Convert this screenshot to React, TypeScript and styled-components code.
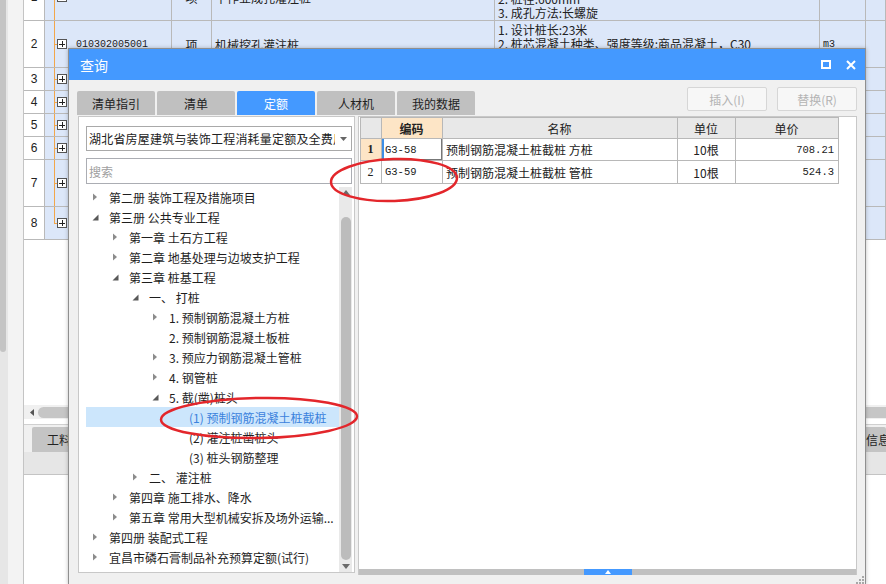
import React from "react";
import styled, { createGlobalStyle } from "styled-components";

const GlobalStyle = createGlobalStyle`
  html, body { margin: 0; padding: 0; }
  body {
    width: 886px; height: 584px; overflow: hidden; background: #fff;
    font-family: "Noto Sans CJK SC", "Noto Sans", sans-serif; font-size: 12px; color: #222;
  }
  * { box-sizing: border-box; }
`;

const Page = styled.div`
  position: relative;
  width: 886px;
  height: 584px;
  overflow: hidden;
  display: flex;
  background: #fff;
`;

/* ---------- background application ---------- */
const SideRail = styled.div`
  width: 8px;
  background: #e6e6e6;
  display: flex;
  flex-direction: column;
`;
const SideThumb = styled.div`
  width: 6px;
  height: 352px;
  background: #c4c4c4;
  border-radius: 0 0 3px 3px;
`;
const Gutter = styled.div`
  width: 16px;
  background: #f3f3f3;
  border-right: 1px solid #c4c4c4;
`;
const Main = styled.div`
  width: 862px;
  display: flex;
  flex-direction: column;
`;
const bgCols = "21px 127px 40px 283px 325px 46px 20px";
const BgRow = styled.div<{ $h: number; $offset?: number }>`
  display: grid;
  grid-template-columns: ${bgCols};
  height: ${(p) => p.$h}px;
  margin-top: ${(p) => p.$offset ?? 0}px;
  flex-shrink: 0;
`;
const BgCell = styled.div<{ $white?: boolean; $center?: boolean }>`
  background: ${(p) => (p.$white ? "#fff" : "#dce7f9")};
  border-right: 1px solid #b9b9b9;
  border-bottom: 1px solid #b9b9b9;
  display: flex;
  align-items: center;
  justify-content: ${(p) => (p.$center ? "center" : "flex-start")};
  padding-left: ${(p) => (p.$center ? 0 : 3)}px;
  overflow: hidden;
  white-space: nowrap;
  font-size: 12px;
`;
const TreeCell = styled(BgCell)<{ $last?: boolean }>`
  padding-left: 12px;
  background:
    linear-gradient(#f2a64a, #f2a64a) no-repeat 9px 50% / 4px 1px,
    linear-gradient(#f2a64a, #f2a64a) no-repeat 9px 0 / 1px ${(p) => (p.$last ? "50%" : "100%")},
    #dce7f9;
`;
const PlusBox = styled.span`
  width: 10px;
  height: 10px;
  flex-shrink: 0;
  border: 1px solid #555;
  background:
    linear-gradient(#222, #222) no-repeat center / 6px 1px,
    linear-gradient(#222, #222) no-repeat center / 1px 6px,
    #fff;
`;
const CodeText = styled.span`
  margin-left: 9px;
  font-family: "Liberation Mono", monospace;
  font-size: 10px;
`;
const DescCell = styled(BgCell)<{ $pt: number }>`
  display: block;
  padding-top: ${(p) => p.$pt}px;
  line-height: 14px;
`;
const UnitCell = styled(BgCell)`
  font-family: "Liberation Mono", monospace;
  font-size: 10px;
`;
const NumText = styled.span`
  font-family: "Liberation Sans", sans-serif;
  font-size: 12px;
`;
const BlankArea = styled.div`
  height: 165px;
  flex-shrink: 0;
  background: #fff;
`;
const HScroll = styled.div`
  height: 14px;
  flex-shrink: 0;
  background: #f0f0f0;
  display: flex;
  align-items: center;
  padding-left: 6px;
  gap: 4px;
`;
const HThumb = styled.div`
  flex: 1;
  height: 11px;
  background: #c6c6c6;
  border-radius: 6px 0 0 6px;
`;
const BottomTabs = styled.div`
  height: 28px;
  margin-top: 5px;
  flex-shrink: 0;
  background: #f0f0f0;
  border-top: 1px solid #d0d0d0;
  display: flex;
  align-items: flex-end;
  padding-left: 8px;
`;
const BTab = styled.div<{ $narrow?: boolean }>`
  height: 25px;
  background: #c4c4c4;
  display: flex;
  align-items: center;
  padding: 0 ${(p) => (p.$narrow ? "0 0 4px" : "15px")};
  border-radius: 2px 2px 0 0;
  white-space: nowrap;
  overflow: hidden;
  font-size: 12px;
  width: ${(p) => (p.$narrow ? "24px" : "auto")};
  margin-left: ${(p) => (p.$narrow ? "auto" : "0")};
`;
const SubBar = styled.div`
  height: 23px;
  flex-shrink: 0;
  background: #e6e6e6;
  border-bottom: 1px solid #c4c4c4;
`;

/* ---------- dialog ---------- */
const Dialog = styled.div`
  position: absolute;
  left: 68px;
  top: 48px;
  width: 798px;
  height: 537px;
  border: 1px solid #8f8f8f;
  background: #f0f0f0;
  display: flex;
  flex-direction: column;
  box-shadow: 0 0 4px rgba(0, 0, 0, 0.25);
`;
const TitleBar = styled.div`
  height: 31px;
  flex-shrink: 0;
  background: #4499ff;
  color: #fff;
  font-size: 14px;
  display: flex;
  align-items: center;
  padding: 0 9px 0 11px;
`;
const TitleText = styled.span`
  flex: 1;
`;
const TitleIcons = styled.div`
  display: flex;
  align-items: center;
  gap: 15px;
`;
const Toolbar = styled.div`
  height: 35px;
  flex-shrink: 0;
  display: flex;
  padding: 7px 8px 0 8px;
`;
const Tabs = styled.div`
  display: flex;
  gap: 2px;
  align-self: flex-end;
`;
const Tab = styled.div<{ $active?: boolean }>`
  width: 78px;
  height: 24px;
  display: flex;
  align-items: center;
  justify-content: center;
  border-radius: 2px 2px 0 0;
  background: ${(p) => (p.$active ? "#4499ff" : "#c0c0c0")};
  color: ${(p) => (p.$active ? "#fff" : "#222")};
  font-size: 12px;
`;
const ToolButtons = styled.div`
  margin-left: auto;
  display: flex;
  gap: 10px;
  align-self: flex-start;
`;
const ToolButton = styled.div`
  width: 80px;
  height: 24px;
  display: flex;
  align-items: center;
  justify-content: center;
  background: #f7f7f7;
  border: 1px solid #d6d6d6;
  border-radius: 2px;
  color: #b4b4b4;
  font-size: 12px;
`;
const Content = styled.div`
  flex: 1;
  display: flex;
  padding: 1px 8px 0 9px;
  min-height: 0;
`;
const LeftPanel = styled.div`
  width: 277px;
  margin-bottom: 2px;
  background: #fff;
  border: 1px solid #c8c8c8;
  display: flex;
  flex-direction: column;
  padding: 9px 2px 0 7px;
`;
const Select = styled.div`
  height: 25px;
  flex-shrink: 0;
  border: 1px solid #a9a9a9;
  display: flex;
  align-items: center;
  padding: 0 4px 0 2px;
`;
const SelectText = styled.span`
  flex: 1;
  overflow: hidden;
  white-space: nowrap;
  font-size: 12px;
  letter-spacing: 0.2px;
`;
const SelectArrow = styled.span`
  width: 12px;
  display: flex;
  justify-content: flex-end;
`;
const SearchBox = styled.div`
  height: 26px;
  flex-shrink: 0;
  margin-top: 7px;
  border: 1px solid #abadb3;
  display: flex;
  align-items: center;
  padding-left: 2px;
  color: #a0a0a0;
  font-size: 12px;
`;
const TreeArea = styled.div`
  flex: 1;
  margin-top: 3px;
  display: flex;
  min-height: 0;
`;
const TreeList = styled.div`
  flex: 1;
  display: flex;
  flex-direction: column;
`;
const TreeRow = styled.div<{ $level: number; $selected?: boolean }>`
  height: 20px;
  flex-shrink: 0;
  display: flex;
  align-items: center;
  padding-left: ${(p) => p.$level * 20}px;
  background: ${(p) => (p.$selected ? "#cce6fc" : "transparent")};
  color: ${(p) => (p.$selected ? "#3b82dc" : "#1e1e1e")};
  white-space: nowrap;
  overflow: hidden;
  font-size: 12px;
`;
const Toggle = styled.span`
  width: 23px;
  flex-shrink: 0;
  display: flex;
  align-items: center;
  padding-left: 6px;
`;
const VScroll = styled.div`
  width: 13px;
  background: #e9e9e9;
  display: flex;
  flex-direction: column;
  align-items: center;
  padding: 3px 0 3px;
`;
const VThumb = styled.div`
  width: 10px;
  flex: 1;
  margin: 22px 0 4px;
  background: #bcbcbc;
  border-radius: 5px;
`;
const RightPanel = styled.div`
  flex: 1;
  margin-left: 3px;
  background: #fff;
  border: 1px solid #c8c8c8;
  border-bottom: none;
  display: flex;
  flex-direction: column;
`;
const GridArea = styled.div`
  flex: 1;
  padding-left: 1px;
`;
const gridCols = "21px 61px 235px 58px 103px";
const GridTable = styled.div`
  width: 479px;
  border-left: 1px solid #b8b8b8;
`;
const GridRow = styled.div<{ $h: number }>`
  display: grid;
  grid-template-columns: ${gridCols};
  height: ${(p) => p.$h}px;
`;
const GCell = styled.div<{
  $bg?: string;
  $align?: "center" | "left" | "right";
  $mono?: boolean;
  $bold?: boolean;
  $focus?: boolean;
}>`
  background: ${(p) => p.$bg ?? "#fff"};
  border-right: 1px solid #b8b8b8;
  border-bottom: 1px solid #b8b8b8;
  display: flex;
  align-items: center;
  justify-content: ${(p) =>
    p.$align === "right" ? "flex-end" : p.$align === "left" ? "flex-start" : "center"};
  padding: 0 4px 0 3px;
  white-space: nowrap;
  overflow: hidden;
  font-family: ${(p) =>
    p.$mono ? '"Liberation Mono", monospace' : '"Noto Sans CJK SC", sans-serif'};
  font-size: ${(p) => (p.$mono ? "10.5px" : "12px")};
  font-weight: ${(p) => (p.$bold ? 700 : 400)};
  box-shadow: ${(p) => (p.$focus ? "inset 2px 0 0 #3d8fe6, inset -1px -1px 0 #777" : "none")};
`;
const HeadCell = styled(GCell)`
  border-top: 1px solid #b8b8b8;
`;
const RowNum = styled.span<{ $bold?: boolean }>`
  font-family: "Liberation Serif", serif;
  font-size: 12px;
  font-weight: ${(p) => (p.$bold ? 700 : 400)};
`;
const Splitter = styled.div`
  height: 6px;
  flex-shrink: 0;
  background: #c0c0c0;
  display: flex;
  justify-content: center;
`;
const SplitHandle = styled.div`
  width: 48px;
  background: #4499ff;
  display: flex;
  align-items: center;
  justify-content: center;
`;
const Footer = styled.div`
  height: 9px;
  flex-shrink: 0;
  display: flex;
  justify-content: flex-end;
  align-items: flex-end;
  padding-right: 1px;
`;
const Annotations = styled.svg`
  position: absolute;
  left: 0;
  top: 0;
  pointer-events: none;
`;

/* ---------- icons ---------- */
const Collapsed = () => (
  <svg width="6" height="8" viewBox="0 0 6 8">
    <path d="M1 0.5 L5 4 L1 7.5 Z" fill="#8c8c8c" />
  </svg>
);
const Expanded = () => (
  <svg width="7" height="7" viewBox="0 0 7 7">
    <path d="M6.5 0.5 L6.5 6.5 L0.5 6.5 Z" fill="#595959" />
  </svg>
);

type Node = { level: number; text: string; state?: "open" | "closed"; selected?: boolean };
const tree: Node[] = [
  { level: 0, text: "第二册 装饰工程及措施项目", state: "closed" },
  { level: 0, text: "第三册 公共专业工程", state: "open" },
  { level: 1, text: "第一章 土石方工程", state: "closed" },
  { level: 1, text: "第二章 地基处理与边坡支护工程", state: "closed" },
  { level: 1, text: "第三章 桩基工程", state: "open" },
  { level: 2, text: "一、 打桩", state: "open" },
  { level: 3, text: "1. 预制钢筋混凝土方桩", state: "closed" },
  { level: 3, text: "2. 预制钢筋混凝土板桩" },
  { level: 3, text: "3. 预应力钢筋混凝土管桩", state: "closed" },
  { level: 3, text: "4. 钢管桩", state: "closed" },
  { level: 3, text: "5. 截(凿)桩头", state: "open" },
  { level: 4, text: "(1) 预制钢筋混凝土桩截桩", selected: true },
  { level: 4, text: "(2) 灌注桩凿桩头" },
  { level: 4, text: "(3) 桩头钢筋整理" },
  { level: 2, text: "二、 灌注桩", state: "closed" },
  { level: 1, text: "第四章 施工排水、降水", state: "closed" },
  { level: 1, text: "第五章 常用大型机械安拆及场外运输...", state: "closed" },
  { level: 0, text: "第四册 装配式工程", state: "closed" },
  { level: 0, text: "宜昌市磷石膏制品补充预算定额(试行)", state: "closed" },
];

const simpleRows: { n: number; h: number }[] = [
  { n: 3, h: 23 },
  { n: 4, h: 23 },
  { n: 5, h: 23 },
  { n: 6, h: 23 },
  { n: 7, h: 47 },
  { n: 8, h: 33 },
];

export default function App() {
  return (
    <>
      <GlobalStyle />
      <Page>
        <SideRail>
          <SideThumb />
        </SideRail>
        <Gutter />
        <Main>
          <BgRow $h={47} $offset={-26}>
            <BgCell $white $center>
              <NumText>1</NumText>
            </BgCell>
            <TreeCell>
              <PlusBox />
              <CodeText>010302003001</CodeText>
            </TreeCell>
            <BgCell $center>项</BgCell>
            <BgCell>干作业成孔灌注桩</BgCell>
            <DescCell $pt={4}>
              <div>1. 桩长:18米</div>
              <div>2. 桩径:600mm</div>
              <div>3. 成孔方法:长螺旋</div>
            </DescCell>
            <UnitCell>m3</UnitCell>
            <BgCell />
          </BgRow>
          <BgRow $h={47}>
            <BgCell $white $center>
              <NumText>2</NumText>
            </BgCell>
            <TreeCell>
              <PlusBox />
              <CodeText>010302005001</CodeText>
            </TreeCell>
            <BgCell $center>项</BgCell>
            <BgCell>机械挖孔灌注桩</BgCell>
            <DescCell $pt={2}>
              <div>1. 设计桩长:23米</div>
              <div>2. 桩芯混凝土种类、强度等级:商品混凝土，C30</div>
              <div>3. 成孔方法:机械挖孔</div>
            </DescCell>
            <UnitCell>m3</UnitCell>
            <BgCell />
          </BgRow>
          {simpleRows.map((r) => (
            <BgRow key={r.n} $h={r.h}>
              <BgCell $white $center>
                <NumText>{r.n}</NumText>
              </BgCell>
              <TreeCell $last={r.n === 8}>
                <PlusBox />
              </TreeCell>
              <BgCell />
              <BgCell />
              <BgCell />
              <BgCell />
              <BgCell />
            </BgRow>
          ))}
          <BlankArea />
          <HScroll>
            <svg width="4" height="7" viewBox="0 0 4 7">
              <path d="M4 0 L0 3.5 L4 7 Z" fill="#555" />
            </svg>
            <HThumb />
          </HScroll>
          <BottomTabs>
            <BTab>工料机显示</BTab>
            <BTab $narrow>信息价</BTab>
          </BottomTabs>
          <SubBar />
        </Main>

        <Dialog>
          <TitleBar>
            <TitleText>查询</TitleText>
            <TitleIcons>
              <svg width="10" height="9" viewBox="0 0 10 9">
                <rect x="1" y="1" width="8" height="7" fill="none" stroke="#fff" strokeWidth="2" />
              </svg>
              <svg width="10" height="10" viewBox="0 0 10 10">
                <path d="M1 1 L9 9 M9 1 L1 9" stroke="#fff" strokeWidth="2" />
              </svg>
            </TitleIcons>
          </TitleBar>
          <Toolbar>
            <Tabs>
              <Tab>清单指引</Tab>
              <Tab>清单</Tab>
              <Tab $active>定额</Tab>
              <Tab>人材机</Tab>
              <Tab>我的数据</Tab>
            </Tabs>
            <ToolButtons>
              <ToolButton>插入(I)</ToolButton>
              <ToolButton>替换(R)</ToolButton>
            </ToolButtons>
          </Toolbar>
          <Content>
            <LeftPanel>
              <Select>
                <SelectText>湖北省房屋建筑与装饰工程消耗量定额及全费用基价表(2018)</SelectText>
                <SelectArrow>
                  <svg width="7" height="4" viewBox="0 0 7 4">
                    <path d="M0 0 L7 0 L3.5 4 Z" fill="#666" />
                  </svg>
                </SelectArrow>
              </Select>
              <SearchBox>搜索</SearchBox>
              <TreeArea>
                <TreeList>
                  {tree.map((n, i) => (
                    <TreeRow key={i} $level={n.level} $selected={n.selected}>
                      <Toggle>
                        {n.state === "open" ? <Expanded /> : n.state === "closed" ? <Collapsed /> : null}
                      </Toggle>
                      {n.text}
                    </TreeRow>
                  ))}
                </TreeList>
                <VScroll>
                  <svg width="8" height="5" viewBox="0 0 8 5">
                    <path d="M0 5 L4 0 L8 5 Z" fill="#6a6a6a" />
                  </svg>
                  <VThumb />
                  <svg width="8" height="5" viewBox="0 0 8 5">
                    <path d="M0 0 L8 0 L4 5 Z" fill="#6a6a6a" />
                  </svg>
                </VScroll>
              </TreeArea>
            </LeftPanel>
            <RightPanel>
              <GridArea>
                <GridTable>
                  <GridRow $h={22}>
                    <HeadCell $bg="#e8e8e8" />
                    <HeadCell $bg="#fde5c6" $bold>
                      编码
                    </HeadCell>
                    <HeadCell $bg="#e8e8e8">名称</HeadCell>
                    <HeadCell $bg="#e8e8e8">单位</HeadCell>
                    <HeadCell $bg="#e8e8e8">单价</HeadCell>
                  </GridRow>
                  <GridRow $h={22}>
                    <GCell $bg="#fde5c6">
                      <RowNum $bold>1</RowNum>
                    </GCell>
                    <GCell $align="left" $mono $focus>
                      G3-58
                    </GCell>
                    <GCell $align="left">预制钢筋混凝土桩截桩 方桩</GCell>
                    <GCell>10根</GCell>
                    <GCell $align="right" $mono>
                      708.21
                    </GCell>
                  </GridRow>
                  <GridRow $h={23}>
                    <GCell>
                      <RowNum>2</RowNum>
                    </GCell>
                    <GCell $align="left" $mono>
                      G3-59
                    </GCell>
                    <GCell $align="left">预制钢筋混凝土桩截桩 管桩</GCell>
                    <GCell>10根</GCell>
                    <GCell $align="right" $mono>
                      524.3
                    </GCell>
                  </GridRow>
                </GridTable>
              </GridArea>
              <Splitter>
                <SplitHandle>
                  <svg width="6" height="4" viewBox="0 0 6 4">
                    <path d="M0 4 L3 0 L6 4 Z" fill="#fff" />
                  </svg>
                </SplitHandle>
              </Splitter>
            </RightPanel>
          </Content>
          <Footer>
            <svg width="8" height="8" viewBox="0 0 8 8">
              <rect x="6" y="0" width="2" height="2" fill="#a8a8a8" />
              <rect x="3" y="3" width="2" height="2" fill="#a8a8a8" />
              <rect x="6" y="3" width="2" height="2" fill="#a8a8a8" />
              <rect x="0" y="6" width="2" height="2" fill="#a8a8a8" />
              <rect x="3" y="6" width="2" height="2" fill="#a8a8a8" />
              <rect x="6" y="6" width="2" height="2" fill="#a8a8a8" />
            </svg>
          </Footer>
        </Dialog>

        <Annotations width="886" height="584" viewBox="0 0 886 584">
          <ellipse
            cx="394"
            cy="180"
            rx="63"
            ry="21"
            fill="none"
            stroke="#e3262b"
            strokeWidth="2.5"
            transform="rotate(-2 394 180)"
          />
          <ellipse
            cx="259"
            cy="418"
            rx="98"
            ry="20"
            fill="none"
            stroke="#e3262b"
            strokeWidth="2.5"
            transform="rotate(-1 259 418)"
          />
        </Annotations>
      </Page>
    </>
  );
}
